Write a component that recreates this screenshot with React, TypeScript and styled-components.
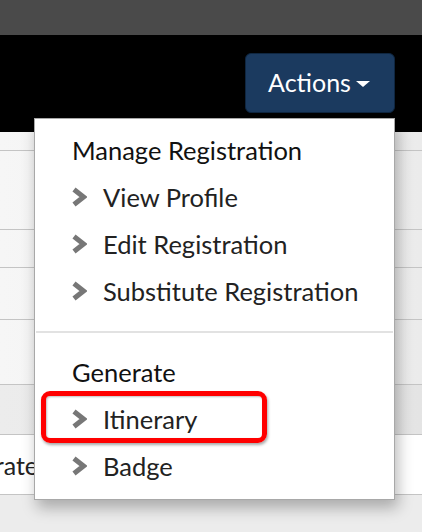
import React from 'react'
import styled, { createGlobalStyle } from 'styled-components'

const GlobalStyle = createGlobalStyle`
  html, body {
    margin: 0;
    padding: 0;
    background: #fff;
  }
  body {
    font-family: Lato, 'Open Sans', sans-serif;
  }
`

const Page = styled.div`
  width: 422px;
  height: 532px;
  position: relative;
  overflow: hidden;
  background: #ececec;
`

const TopBar = styled.div`
  height: 35px;
  background: #4a4a4a;
`

const Header = styled.div`
  height: 97px;
  background: #000;
  display: flex;
  justify-content: flex-end;
  align-items: flex-start;
  padding: 18px 27px 0 0;
  box-sizing: border-box;
`

const ActionsButton = styled.button`
  width: 150px;
  height: 60px;
  border: 1px solid #0f2640;
  border-radius: 6px;
  background: #1b3a5f;
  color: #fff;
  font-family: Lato, sans-serif;
  font-size: 25px;
  display: flex;
  align-items: center;
  justify-content: center;
  gap: 5px;
  padding: 0 2px 2px 0;
  cursor: pointer;
`

const Caret = styled.span`
  width: 0;
  height: 0;
  border-left: 7px solid transparent;
  border-right: 7px solid transparent;
  border-top: 6px solid #fff;
  margin-top: 3px;
`

const Table = styled.div`
  display: flex;
  flex-direction: column;
`

const Row = styled.div<{ $h: number; $bg?: string }>`
  height: ${(p) => p.$h}px;
  background: ${(p) => p.$bg ?? 'linear-gradient(to right, #f6f6f6, #ebebeb)'};
  border-bottom: 1px solid #c4c4c4;
  box-sizing: border-box;
  font-size: 25px;
  color: #222;
  display: flex;
  align-items: center;
  justify-content: flex-end;
  padding-right: 384px;
  white-space: nowrap;
`

const Menu = styled.div`
  position: absolute;
  left: 34px;
  top: 118px;
  width: 361px;
  height: 382px;
  box-sizing: border-box;
  background: #fff;
  border: 1px solid #a8a8a8;
  box-shadow: 3px 8px 14px rgba(0, 0, 0, 0.28);
  padding-top: 16px;
  display: flex;
  flex-direction: column;
`

const Section = styled.div`
  display: flex;
  flex-direction: column;
`

const GroupTitle = styled.div`
  font-size: 25.5px;
  color: #111;
  height: 30px;
  line-height: 30px;
  padding-left: 37px;
  margin-bottom: 8px;
  white-space: nowrap;
`

const Item = styled.div`
  position: relative;
  height: 47px;
  display: flex;
  align-items: center;
  gap: 16px;
  padding-left: 36px;
  font-size: 25.5px;
  color: #222;
  white-space: nowrap;
`

const Highlight = styled.div`
  position: absolute;
  left: 6px;
  top: -4px;
  width: 226px;
  height: 52px;
  box-sizing: border-box;
  border: 5px solid #ff0000;
  border-radius: 9px;
  box-shadow: 1px 2px 3px rgba(0, 0, 0, 0.35), inset 1px 1px 2px rgba(0, 0, 0, 0.25);
`

const Divider = styled.div`
  height: 2px;
  background: #e2e2e2;
  margin: 17px 1px 24px;
`

const Chevron = () => (
  <svg width="16" height="20" viewBox="0 0 16 20">
    <path d="M3 2.5 L12.5 10 L3 17.5" fill="none" stroke="#777" strokeWidth="5" strokeLinejoin="miter" />
  </svg>
)

const MenuItem = ({ label, highlight }: { label: string; highlight?: boolean }) => (
  <Item>
    {highlight ? <Highlight /> : null}
    <Chevron />
    <span>{label}</span>
  </Item>
)

export default function App() {
  return (
    <>
      <GlobalStyle />
      <Page>
        <TopBar />
        <Header>
          <ActionsButton>
            Actions
            <Caret />
          </ActionsButton>
        </Header>
        <Table>
          <Row $h={19} />
          <Row $h={79} />
          <Row $h={38} />
          <Row $h={52} />
          <Row $h={65} />
          <Row $h={50} $bg="linear-gradient(to right, #ececec, #e4e4e4)" />
          <Row $h={60} $bg="#fff">Generate</Row>
        </Table>
        <Menu>
          <Section>
            <GroupTitle>Manage Registration</GroupTitle>
            <MenuItem label="View Profile" />
            <MenuItem label="Edit Registration" />
            <MenuItem label="Substitute Registration" />
          </Section>
          <Divider />
          <Section>
            <GroupTitle>Generate</GroupTitle>
            <MenuItem label="Itinerary" highlight />
            <MenuItem label="Badge" />
          </Section>
        </Menu>
      </Page>
    </>
  )
}
